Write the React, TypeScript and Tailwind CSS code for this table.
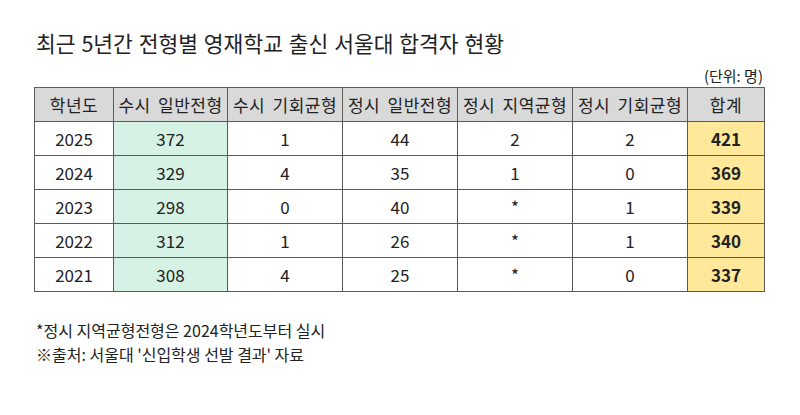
const headers = ["학년도", "수시 일반전형", "수시 기회균형", "정시 일반전형", "정시 지역균형", "정시 기회균형", "합계"];
const widths = ["w-[79px]", "w-[114px]", "w-[115px]", "w-[115px]", "w-[115px]", "w-[115px]", "w-[77px]"];

const rows = [
  ["2025", "372", "1", "44", "2", "2", "421"],
  ["2024", "329", "4", "35", "1", "0", "369"],
  ["2023", "298", "0", "40", "*", "1", "339"],
  ["2022", "312", "1", "26", "*", "1", "340"],
  ["2021", "308", "4", "25", "*", "0", "337"],
];

function cellClass(i: number) {
  if (i === 1) return "bg-[#d5f2e5]";
  if (i === 6) return "bg-[#ffe89a] font-bold";
  return "bg-white";
}

export default function App() {
  return (
    <div className="w-[800px] h-[415px] bg-white text-[#222] font-['Malgun_Gothic','Noto_Sans_CJK_KR',sans-serif]">
      <div className="pl-[36px] pt-[28px]">
        <h1 className="text-[21.5px] leading-[30px] [word-spacing:1px]">최근 5년간 전형별 영재학교 출신 서울대 합격자 현황</h1>
      </div>
      <div className="w-[764px] text-right text-[15px] leading-[20px] mt-[8px] pr-[1px]">(단위: 명)</div>
      <table className="ml-[34px] mt-[1px] border-collapse table-fixed w-[731px] text-[17px]">
        <thead>
          <tr className="h-[34px]">
            {headers.map((h, i) => (
              <th key={h} className={`${widths[i]} border border-[#5a5a5a] bg-[#d9d9d9] font-normal p-0 whitespace-nowrap tracking-[0.5px] [word-spacing:3px]`}>
                {h}
              </th>
            ))}
          </tr>
        </thead>
        <tbody>
          {rows.map((r) => (
            <tr key={r[0]} className="h-[34px]">
              {r.map((c, i) => (
                <td key={i} className={`border border-[#5a5a5a] text-center p-0 ${cellClass(i)}`}>
                  {c}
                </td>
              ))}
            </tr>
          ))}
        </tbody>
      </table>
      <div className="pl-[36px] mt-[26px] text-[16px] leading-[24px]">
        <p>*정시 지역균형전형은 2024학년도부터 실시</p>
        <p>※출처: 서울대 '신입학생 선발 결과' 자료</p>
      </div>
    </div>
  );
}
